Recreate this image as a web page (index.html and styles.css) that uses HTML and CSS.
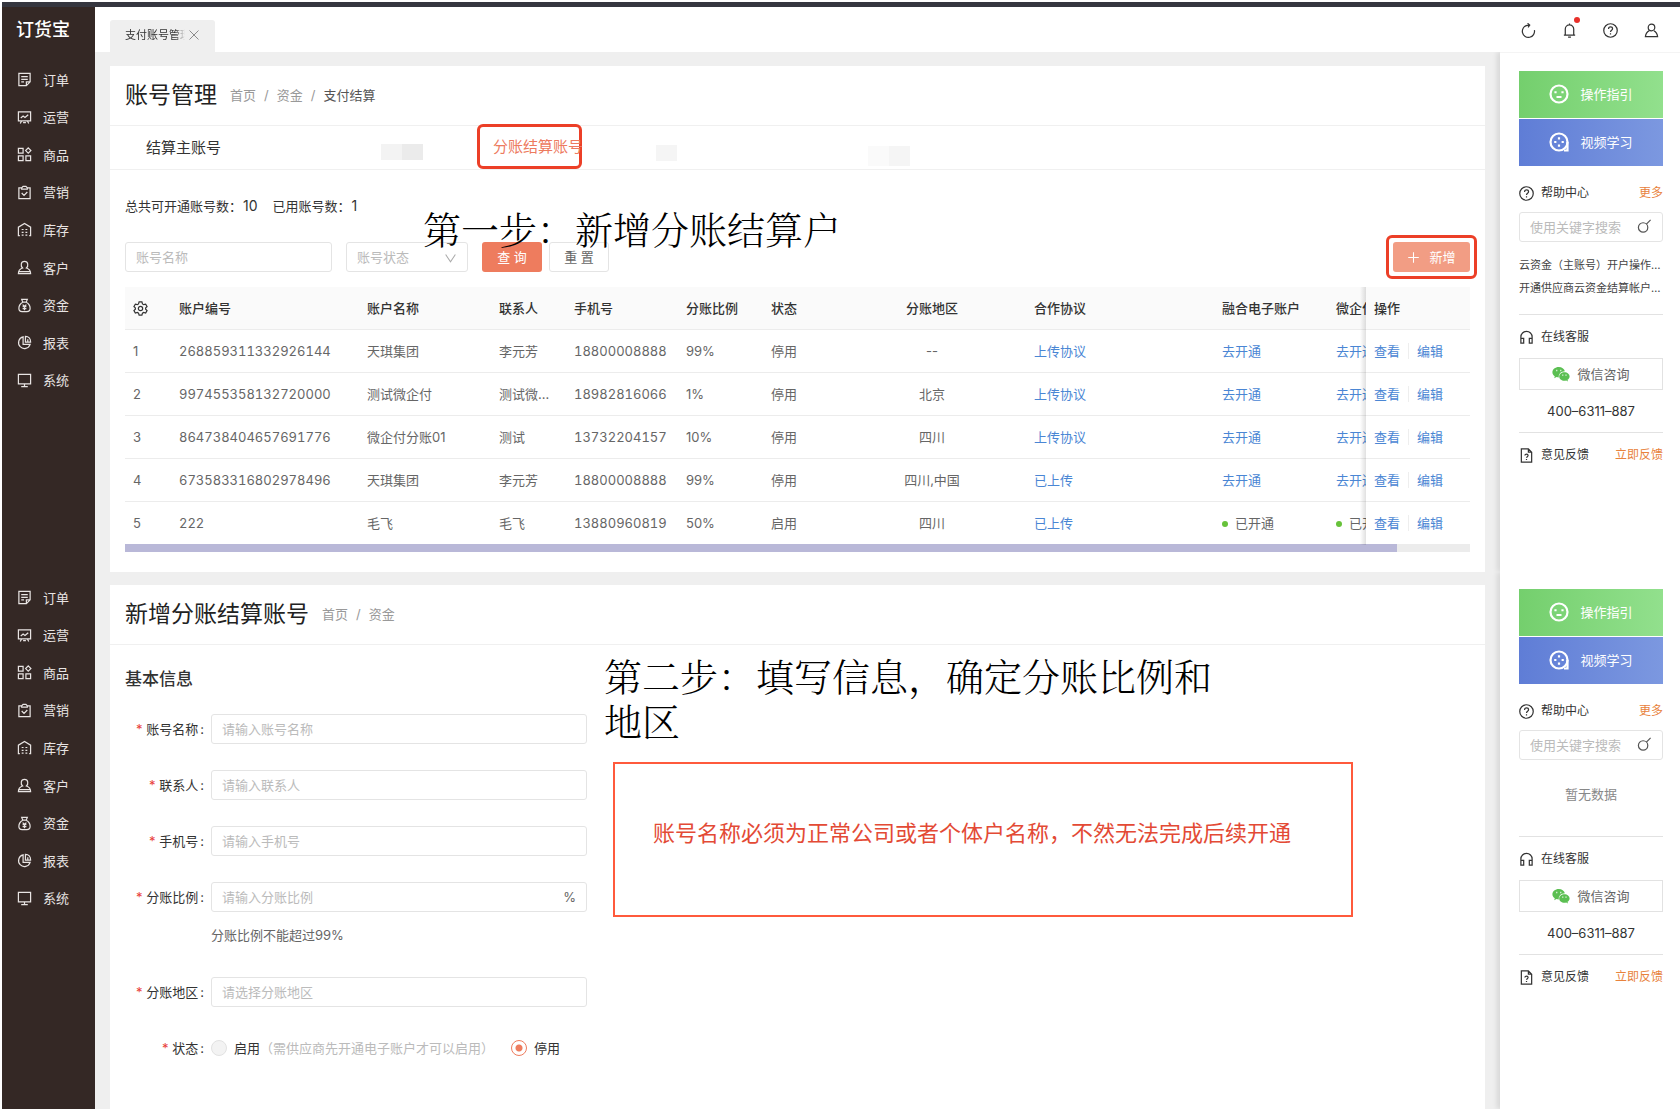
FILE: index.html
```html
<!DOCTYPE html>
<html lang="zh-CN">
<head>
    <meta charset="UTF-8">
    <meta name="viewport" content="width=device-width, initial-scale=1.0">
    <title>订货宝 - 账号管理</title>
    <link rel="stylesheet" href="styles.css">
</head>
<body>
    <!-- icon set -->
    <svg class="sprite" aria-hidden="true">
        <symbol id="i-order" viewBox="0 0 16 16"><path d="M2 1.5h12v9l-4 4H2zM14 10.5h-4v4M4.5 5h7M4.5 7.8h7M4.5 10.6h3"/></symbol>
        <symbol id="i-run" viewBox="0 0 16 16"><path d="M1.5 2h13v9.500h-13zM4 8.500l2.500-2 2 1.500L12 5M5 11.500l-1.500 3M11 11.500l1.500 3M6.500 13.500h3"/></symbol>
        <symbol id="i-goods" viewBox="0 0 16 16"><path d="M1.500 1.500h5v5h-5zM1.500 9.500h5v5h-5zM9.500 9.500h5v5h-5zM12 1l2.800 2.800L12 6.600 9.200 3.800z"/></symbol>
        <symbol id="i-market" viewBox="0 0 16 16"><path d="M5 3H2v11.500h12V3h-3M5 4.500V3l1.500-1.500h3L11 3v1.500zM5 8.500l2.500 2.500L11 7.500"/></symbol>
        <symbol id="i-stock" viewBox="0 0 16 16"><path d="M3 14.500H1.500V5.500L8 1.500l6.500 4v9H13M5 8h2M9 8h2M5 11h2M9 11h2M5 14h2M9 14h2"/></symbol>
        <symbol id="i-client" viewBox="0 0 16 16"><path d="M6 8.500C3.700 6.500 3.800 1.500 8 1.500s4.300 5 2 7c2.500.8 4.500 2.500 4.500 6h-13c0-3.500 2-5.200 4.500-6zM2 12.300h12"/></symbol>
        <symbol id="i-money" viewBox="0 0 16 16"><path d="M5 1.500h6L9.800 4.500H6.200zM6.200 4.500C3.500 6 2 8.500 2 11c0 2.500 1.500 3.500 3.500 3.500h5c2 0 3.500-1 3.500-3.500 0-2.500-1.500-5-4.200-6.500M6 7l2 2 2-2M8 9v4M6 9.300h4M6 11.300h4"/></symbol>
        <symbol id="i-report" viewBox="0 0 16 16"><path d="M6.500 2A6.300 6.300 0 1 0 14 10H6.500zM9 1.500V7.500h5.500C14.500 4 12.500 1.500 9 1.500zM11.500 4.500v3"/></symbol>
        <symbol id="i-system" viewBox="0 0 16 16"><path d="M1.500 1.500h13v10h-13zM8 11.500v3M4.500 14.500h7"/></symbol>
        <symbol id="i-refresh" viewBox="0 0 16 16"><path d="M14.300 7.500A6.500 6.500 0 1 1 6.500 2.500L9 2.300M7 .3l2.300 2-1.800 2.400"/></symbol>
        <symbol id="i-bell" viewBox="0 0 16 16"><path d="M3.500 13V6.500a4.500 4.500 0 0 1 9 0V13M2 13h12M8 2V.5M6.500 15h3"/></symbol>
        <symbol id="i-help" viewBox="0 0 16 16"><circle cx="8" cy="8" r="7.200"/><path d="M5.900 6.300c0-3 4.300-2.800 4.300-.2C10.200 7.700 8 7.700 8 9.500M8 11v1.200"/></symbol>
        <symbol id="i-user" viewBox="0 0 16 16"><circle cx="8" cy="4.800" r="3.500"/><path d="M5.500 8.200C3 9.500 1.800 11.500 1.500 14.500h13c-.3-3-1.500-5-4-6.300"/></symbol>
        <symbol id="i-gear" viewBox="0 0 16 16"><path d="M6.500 1h3l.6 2.100 1.300.8 2.100-.6L15 5.900l-1.500 1.500v1.300L15 10.200l-1.500 2.600-2.100-.6-1.300.8-.6 2.100h-3l-.6-2.100-1.300-.8-2.100.6L1 10.200l1.500-1.500V7.400L1 5.900l1.500-2.600 2.100.6 1.300-.8z"/><circle cx="8" cy="8" r="2.300"/></symbol>
        <symbol id="i-search" viewBox="0 0 16 16"><circle cx="6.500" cy="9" r="5"/><path d="M10 5.500L14.500 1"/></symbol>
        <symbol id="i-headset" viewBox="0 0 16 16"><path d="M2 10V7.500a6 6 0 0 1 12 0V10M2 9h3v5H2zM11 9h3v5h-3z"/></symbol>
        <symbol id="i-doc" viewBox="0 0 16 16"><path d="M2.500 1h7.500l3.500 3.500V15h-11zM10 1v3.500h3.500M6.300 8c0-2 3.400-2 3.400 0C9.700 9.200 8 9.300 8 10.500M8 11.800v1"/></symbol>
        <symbol id="i-smile" viewBox="0 0 20 20"><circle cx="10" cy="10" r="8.500"/><path d="M6.500 7.300v2M13.500 7.300v2M7.500 13h5"/></symbol>
        <symbol id="i-video" viewBox="0 0 20 20"><circle cx="10" cy="10" r="8.500"/><path d="M10 5.200v2.200M10 12.600v2.200M5.200 10h2.200M12.600 10h2.200M18.500 10v9.500M15 18.500h4"/></symbol>
        <symbol id="i-wechat" viewBox="0 0 18 16"><path fill="#5bbf52" stroke="none" d="M6.800 1C3.200 1 .4 3.300.4 6.200c0 1.700.9 3.100 2.400 4.100L2.200 12.300l2.300-1.200c.8.200 1.500.3 2.300.3C6.400 8 9 5.400 12.900 5.300 12.200 2.800 9.800 1 6.800 1z"/><path fill="#5bbf52" stroke="none" d="M12.400 6.200c-2.900 0-5.200 1.900-5.200 4.300s2.300 4.300 5.200 4.300c.6 0 1.200-.1 1.800-.3l1.800 1-.5-1.700c1.300-.8 2.100-2 2.100-3.300 0-2.400-2.300-4.300-5.200-4.300z"/><path stroke="#fff" d="M4.300 4.500h1M8.300 4.500h1M10.300 9.200h1M13.500 9.200h1"/></symbol>
        <symbol id="i-close" viewBox="0 0 16 16"><path d="M2 2l12 12M14 2L2 14"/></symbol>
        <symbol id="i-down" viewBox="0 0 16 16"><path d="M2 3l6 9 6-9"/></symbol>
        <symbol id="i-plus" viewBox="0 0 16 16"><path d="M8 1.500v13M1.500 8h13"/></symbol>
    </svg>

    <div class="topline"></div>

    <!-- account list -->
    <div class="screen">
        <aside class="sidebar">
            <div class="logo">订货宝</div>
            <nav class="menu">
                <a href="#"><svg><use href="#i-order"/></svg>订单</a>
                <a href="#"><svg><use href="#i-run"/></svg>运营</a>
                <a href="#"><svg><use href="#i-goods"/></svg>商品</a>
                <a href="#"><svg><use href="#i-market"/></svg>营销</a>
                <a href="#"><svg><use href="#i-stock"/></svg>库存</a>
                <a href="#"><svg><use href="#i-client"/></svg>客户</a>
                <a href="#"><svg><use href="#i-money"/></svg>资金</a>
                <a href="#"><svg><use href="#i-report"/></svg>报表</a>
                <a href="#"><svg><use href="#i-system"/></svg>系统</a>
            </nav>
        </aside>

        <header class="header">
            <div class="page-tab">
                <span class="page-tab-name">支付账号管理</span>
                <button class="icon-button" aria-label="关闭"><svg class="icon-close"><use href="#i-close"/></svg></button>
            </div>
            <div class="header-tools">
                <button class="icon-button" aria-label="刷新"><svg><use href="#i-refresh"/></svg></button>
                <button class="icon-button" aria-label="消息"><svg><use href="#i-bell"/></svg><span class="dot"></span></button>
                <button class="icon-button" aria-label="帮助"><svg><use href="#i-help"/></svg></button>
                <button class="icon-button" aria-label="用户"><svg><use href="#i-user"/></svg></button>
            </div>
        </header>

        <main class="main">
            <section class="card list-card">
                <div class="card-title">
                    <h1>账号管理</h1>
                    <div class="breadcrumb"><a href="#">首页</a><i>/</i><a href="#">资金</a><i>/</i><span class="current">支付结算</span></div>
                </div>
                <div class="tabs">
                    <button class="tab">结算主账号</button>
                    <span class="blank blank-a"></span>
                    <button class="tab active">分账结算账号</button>
                    <span class="blank blank-b"></span>
                    <span class="blank blank-c"></span>
                </div>
                <div class="list-body">
                    <div class="stats">
                        <span>总共可开通账号数：<b>10</b></span>
                        <span>已用账号数：<b>1</b></span>
                    </div>
                    <div class="filter">
                        <input type="text" class="field filter-name" placeholder="账号名称" aria-label="账号名称">
                        <div class="select-box">
                            <select class="field" aria-label="账号状态">
                                <option>账号状态</option>
                                <option>启用</option>
                                <option>停用</option>
                            </select>
                            <svg><use href="#i-down"/></svg>
                        </div>
                        <button class="btn btn-primary">查 询</button>
                        <button class="btn btn-reset">重 置</button>
                        <div class="add-mark">
                            <button class="btn btn-add"><svg><use href="#i-plus"/></svg>新增</button>
                        </div>
                    </div>
                    <table class="table">
                        <colgroup>
                            <col class="c-index"><col class="c-no"><col class="c-name"><col class="c-contact"><col class="c-phone"><col class="c-ratio"><col class="c-status"><col class="c-area"><col><col class="c-account"><col class="c-wx"><col class="c-action">
                        </colgroup>
                        <thead>
                            <tr>
                                <th><svg class="icon-gear"><use href="#i-gear"/></svg></th>
                                <th>账户编号</th>
                                <th>账户名称</th>
                                <th>联系人</th>
                                <th>手机号</th>
                                <th>分账比例</th>
                                <th>状态</th>
                                <th class="center">分账地区</th>
                                <th>合作协议</th>
                                <th>融合电子账户</th>
                                <th class="cut">微企付</th>
                                <th class="fixed">操作</th>
                            </tr>
                        </thead>
                        <tbody>
                            <tr>
                                <td>1</td>
                                <td class="num">268859311332926144</td>
                                <td>天琪集团</td>
                                <td class="contact">李元芳</td>
                                <td class="num">18800008888</td>
                                <td>99%</td>
                                <td>停用</td>
                                <td class="center">--</td>
                                <td><a href="#">上传协议</a></td>
                                <td><a href="#">去开通</a></td>
                                <td class="cut"><a href="#">去开通</a></td>
                                <td class="fixed"><a href="#">查看</a><a href="#">编辑</a></td>
                            </tr>
                            <tr>
                                <td>2</td>
                                <td class="num">997455358132720000</td>
                                <td>测试微企付</td>
                                <td class="contact">测试微企付</td>
                                <td class="num">18982816066</td>
                                <td>1%</td>
                                <td>停用</td>
                                <td class="center">北京</td>
                                <td><a href="#">上传协议</a></td>
                                <td><a href="#">去开通</a></td>
                                <td class="cut"><a href="#">去开通</a></td>
                                <td class="fixed"><a href="#">查看</a><a href="#">编辑</a></td>
                            </tr>
                            <tr>
                                <td>3</td>
                                <td class="num">864738404657691776</td>
                                <td>微企付分账01</td>
                                <td class="contact">测试</td>
                                <td class="num">13732204157</td>
                                <td>10%</td>
                                <td>停用</td>
                                <td class="center">四川</td>
                                <td><a href="#">上传协议</a></td>
                                <td><a href="#">去开通</a></td>
                                <td class="cut"><a href="#">去开通</a></td>
                                <td class="fixed"><a href="#">查看</a><a href="#">编辑</a></td>
                            </tr>
                            <tr>
                                <td>4</td>
                                <td class="num">673583316802978496</td>
                                <td>天琪集团</td>
                                <td class="contact">李元芳</td>
                                <td class="num">18800008888</td>
                                <td>99%</td>
                                <td>停用</td>
                                <td class="center">四川,中国</td>
                                <td><a href="#">已上传</a></td>
                                <td><a href="#">去开通</a></td>
                                <td class="cut"><a href="#">去开通</a></td>
                                <td class="fixed"><a href="#">查看</a><a href="#">编辑</a></td>
                            </tr>
                            <tr>
                                <td>5</td>
                                <td class="num">222</td>
                                <td>毛飞</td>
                                <td class="contact">毛飞</td>
                                <td class="num">13880960819</td>
                                <td>50%</td>
                                <td>启用</td>
                                <td class="center">四川</td>
                                <td><a href="#">已上传</a></td>
                                <td><span class="opened">已开通</span></td>
                                <td class="cut"><span class="opened">已开通</span></td>
                                <td class="fixed"><a href="#">查看</a><a href="#">编辑</a></td>
                            </tr>
                        </tbody>
                    </table>
                    <div class="scrollbar"><div class="scrollbar-thumb"></div></div>
                </div>
                <p class="step step-one">第一步：新增分账结算户</p>
            </section>
        </main>

        <aside class="helper">
            <a href="#" class="guide guide-green"><svg><use href="#i-smile"/></svg>操作指引</a>
            <a href="#" class="guide guide-blue"><svg><use href="#i-video"/></svg>视频学习</a>
            <div class="helper-title help-center"><svg><use href="#i-help"/></svg>帮助中心<a href="#">更多</a></div>
            <div class="search">
                <input type="text" class="field" placeholder="使用关键字搜索" aria-label="使用关键字搜索">
                <svg><use href="#i-search"/></svg>
            </div>
            <div class="articles">
                <a href="#">云资金（主账号）开户操作指引</a>
                <a href="#">开通供应商云资金结算帐户流程</a>
            </div>
            <div class="helper-title line"><svg><use href="#i-headset"/></svg>在线客服</div>
            <button class="wechat"><svg><use href="#i-wechat"/></svg>微信咨询</button>
            <div class="phone">400–6311–887</div>
            <div class="helper-title line"><svg><use href="#i-doc"/></svg>意见反馈<a href="#">立即反馈</a></div>
        </aside>
    </div>

    <!-- new account form -->
    <div class="screen screen-form">
        <aside class="sidebar">
            <nav class="menu">
                <a href="#"><svg><use href="#i-order"/></svg>订单</a>
                <a href="#"><svg><use href="#i-run"/></svg>运营</a>
                <a href="#"><svg><use href="#i-goods"/></svg>商品</a>
                <a href="#"><svg><use href="#i-market"/></svg>营销</a>
                <a href="#"><svg><use href="#i-stock"/></svg>库存</a>
                <a href="#"><svg><use href="#i-client"/></svg>客户</a>
                <a href="#"><svg><use href="#i-money"/></svg>资金</a>
                <a href="#"><svg><use href="#i-report"/></svg>报表</a>
                <a href="#"><svg><use href="#i-system"/></svg>系统</a>
            </nav>
        </aside>

        <main class="main">
            <section class="card form-card">
                <div class="card-title">
                    <h1>新增分账结算账号</h1>
                    <div class="breadcrumb"><a href="#">首页</a><i>/</i><a href="#">资金</a></div>
                </div>
                <div class="form-body">
                    <form class="form">
                        <h2>基本信息</h2>
                        <div class="form-row">
                            <label for="name">账号名称</label>
                            <input type="text" class="field" id="name" placeholder="请输入账号名称">
                        </div>
                        <div class="form-row">
                            <label for="contact">联系人</label>
                            <input type="text" class="field" id="contact" placeholder="请输入联系人">
                        </div>
                        <div class="form-row">
                            <label for="mobile">手机号</label>
                            <input type="text" class="field" id="mobile" placeholder="请输入手机号">
                        </div>
                        <div class="form-row">
                            <label for="ratio">分账比例</label>
                            <div class="suffix-box">
                                <input type="text" class="field" id="ratio" placeholder="请输入分账比例">
                                <span class="suffix">%</span>
                            </div>
                            <p class="hint">分账比例不能超过99%</p>
                        </div>
                        <div class="form-row">
                            <label for="area">分账地区</label>
                            <input type="text" class="field" id="area" placeholder="请选择分账地区">
                        </div>
                        <div class="form-row">
                            <span class="label">状态</span>
                            <div class="radios">
                                <input type="radio" name="status" id="on" disabled>
                                <label for="on">启用<span>（需供应商先开通电子账户才可以启用）</span></label>
                                <input type="radio" name="status" id="off" checked>
                                <label for="off">停用</label>
                            </div>
                        </div>
                    </form>
                    <div class="notes">
                        <p class="step">第二步：填写信息，确定分账比例和地区</p>
                        <div class="warning">账号名称必须为正常公司或者个体户名称，不然无法完成后续开通</div>
                    </div>
                </div>
            </section>
        </main>

        <aside class="helper">
            <a href="#" class="guide guide-green"><svg><use href="#i-smile"/></svg>操作指引</a>
            <a href="#" class="guide guide-blue"><svg><use href="#i-video"/></svg>视频学习</a>
            <div class="helper-title help-center"><svg><use href="#i-help"/></svg>帮助中心<a href="#">更多</a></div>
            <div class="search">
                <input type="text" class="field" placeholder="使用关键字搜索" aria-label="使用关键字搜索">
                <svg><use href="#i-search"/></svg>
            </div>
            <div class="empty">暂无数据</div>
            <div class="helper-title line"><svg><use href="#i-headset"/></svg>在线客服</div>
            <button class="wechat"><svg><use href="#i-wechat"/></svg>微信咨询</button>
            <div class="phone">400–6311–887</div>
            <div class="helper-title line"><svg><use href="#i-doc"/></svg>意见反馈<a href="#">立即反馈</a></div>
        </aside>
    </div>
</body>
</html>
```
FILE: styles.css
```css
* {
    box-sizing: border-box;
}
body {
    display: flex;
    flex-direction: column;
    min-height: 100vh;
    margin: 0;
    padding: 2px 0 3px 2px;
    background-color: #fff;
    color: #333;
    font-family: Inter, "Noto Sans CJK SC", sans-serif;
    font-size: 13px;
    line-height: 20px;
}
h1, h2, p {
    margin: 0;
    font-weight: 400;
}
a {
    color: inherit;
    text-decoration: none;
}
button, input, select {
    margin: 0;
    font: inherit;
    color: inherit;
}
button {
    padding: 0;
    border: none;
    background: none;
    cursor: pointer;
}
svg {
    flex: none;
    width: 15px;
    height: 15px;
    fill: none;
    stroke: currentColor;
    stroke-width: 1.3;
}
.sprite {
    position: absolute;
    width: 0;
    height: 0;
}
.topline {
    height: 5px;
    background-color: #35363f;
}
.screen {
    display: grid;
    grid-template-columns: 93px minmax(0, 1fr) 180px;
    grid-template-rows: 45px auto;
    background-color: #efefef;
}
.screen-form {
    flex: 1;
    grid-template-rows: auto;
}

/* left menu */
.sidebar {
    grid-row: 1 / -1;
    background-color: #342825;
    color: #e8e4e3;
}
.logo {
    height: 54px;
    padding: 13px 0 0 14px;
    color: #fff;
    font-size: 18px;
    font-weight: 500;
}
.menu {
    display: grid;
    grid-auto-rows: 1fr;
    height: 338px;
}
.screen-form .menu {
    margin-top: 7px;
}
.menu a {
    display: flex;
    align-items: center;
    gap: 11px;
    padding-left: 15px;
}

/* header */
.header {
    grid-column: 2 / -1;
    display: flex;
    justify-content: space-between;
    padding: 0 21px 0 15px;
    background-color: #fff;
}
.page-tab {
    display: flex;
    align-items: center;
    gap: 3px;
    width: 105px;
    margin-top: 13px;
    padding: 0 15px 2px;
    background-color: #efefef;
    border-radius: 3px 3px 0 0;
    font-size: 11px;
}
.page-tab-name {
    width: 60px;
    overflow: hidden;
    white-space: nowrap;
    -webkit-mask-image: linear-gradient(90deg, #000 50px, transparent 60px);
    mask-image: linear-gradient(90deg, #000 50px, transparent 60px);
}
.icon-button {
    display: flex;
    position: relative;
}
.icon-close {
    width: 12px;
    height: 12px;
    color: #888;
}
.header-tools {
    display: flex;
    align-items: center;
    gap: 26px;
    padding-top: 2px;
}
.dot {
    position: absolute;
    top: -6px;
    right: -3px;
    width: 6px;
    height: 6px;
    background-color: #e8302a;
    border-radius: 50%;
}

/* cards */
.main {
    display: flex;
    flex-direction: column;
    padding: 14px 15px 0;
}
.screen-form .main {
    padding-top: 13px;
}
.card {
    position: relative;
    flex: 1;
    background-color: #fff;
}
.card-title {
    display: flex;
    align-items: center;
    gap: 13px;
    height: 60px;
    padding: 0 15px 1px;
    border-bottom: 1px solid #f0f0f0;
}
.card-title h1 {
    color: #222;
    font-size: 23px;
    line-height: 30px;
}
.breadcrumb {
    color: #999;
}
.breadcrumb i {
    margin: 0 8px;
    font-style: normal;
}
.breadcrumb .current {
    color: #555;
}
.tabs {
    display: flex;
    align-items: center;
    height: 44px;
    padding-left: 36px;
    border-bottom: 1px solid #f0f0f0;
    font-size: 15px;
}
.tab.active {
    align-self: stretch;
    margin: -2px 0 0 54px;
    width: 105px;
    padding-left: 13px;
    border: 3px solid #ec3f27;
    border-radius: 6px;
    color: #ed7b5f;
    white-space: nowrap;
}
.blank {
    height: 16px;
    background-color: #f5f5f5;
}
.blank-a {
    width: 42px;
    margin: 8px 0 0 160px;
    background: linear-gradient(90deg, #f3f3f3 50%, #ebebeb 50%);
}
.blank-b {
    width: 21px;
    margin: 10px 0 0 74px;
}
.blank-c {
    width: 42px;
    height: 20px;
    margin: 16px 0 0 191px;
    background: linear-gradient(90deg, #fafafa 50%, #f5f5f5 50%);
}
.list-body {
    padding: 26px 15px 20px;
}
.stats {
    display: flex;
    gap: 15px;
}
.stats b {
    margin-left: 1px;
    font-size: 14px;
    font-weight: 400;
}

/* filter */
.filter {
    display: flex;
    align-items: center;
    height: 30px;
    margin: 26px 0 15px;
}
.field {
    width: 100%;
    height: 30px;
    padding: 0 10px;
    border: 1px solid #e4e4e4;
    border-radius: 3px;
    background-color: #fff;
    outline: none;
}
.field::placeholder {
    color: #bbb;
    opacity: 1;
}
.filter-name {
    width: 207px;
}
.select-box {
    position: relative;
    width: 122px;
    margin: 0 14px;
}
.select-box select {
    appearance: none;
    color: #bbb;
}
.select-box svg {
    position: absolute;
    top: 10px;
    right: 11px;
    width: 13px;
    height: 13px;
    color: #aaa;
    pointer-events: none;
}
.btn {
    width: 60px;
    height: 30px;
    border-radius: 3px;
}
.btn-primary {
    background-color: #ee7c5e;
    color: #fff;
}
.btn-reset {
    margin-left: 7px;
    border: 1px solid #e4e4e4;
    color: #666;
}
.add-mark {
    margin: 0 -7px 0 auto;
    padding: 4px;
    border: 3px solid #ec3f27;
    border-radius: 6px;
}
.btn-add {
    display: flex;
    align-items: center;
    justify-content: center;
    gap: 9px;
    width: 77px;
    background-color: #f29d84;
    color: #fff;
}
.btn-add svg {
    width: 13px;
    height: 13px;
}

/* table */
.table {
    width: 100%;
    table-layout: fixed;
    border-collapse: separate;
    border-spacing: 0;
    color: #666;
}
.c-index { width: 46px; }
.c-no, .c-area { width: 188px; }
.c-name { width: 132px; }
.c-contact, .c-status { width: 75px; }
.c-phone { width: 112px; }
.c-ratio { width: 85px; }
.c-account { width: 114px; }
.c-wx { width: 38px; }
.c-action { width: 104px; }
.table th, .table td {
    height: 43px;
    padding: 0 8px;
    border-bottom: 1px solid #ececec;
    text-align: left;
    white-space: nowrap;
}
.table tr:last-child td {
    height: 42px;
    border-bottom: none;
}
.table th {
    background-color: #fafafa;
    color: #333;
    font-weight: 500;
}
.table tr:last-child th {
    border-bottom: 1px solid #ececec;
}
.table .center {
    text-align: center;
}
.table .contact {
    padding-right: 16px;
    overflow: hidden;
    text-overflow: ellipsis;
}
.table .cut {
    padding-right: 0;
    overflow: hidden;
}
.table .fixed {
    position: relative;
}
.table .fixed::before {
    content: "";
    position: absolute;
    top: 0;
    bottom: -1px;
    left: -6px;
    width: 6px;
    background: linear-gradient(90deg, rgba(0, 0, 0, 0), rgba(0, 0, 0, 0.12));
}
.table .fixed a + a {
    margin-left: 8px;
    padding-left: 8px;
    border-left: 1px solid #eee;
}
.table a {
    color: #4a86d4;
}
.num {
    font-variant-numeric: tabular-nums;
}
.icon-gear {
    display: block;
}
.opened::before {
    content: "";
    display: inline-block;
    width: 6px;
    height: 6px;
    margin-right: 7px;
    border-radius: 50%;
    background-color: #67c23a;
    vertical-align: middle;
}
.scrollbar {
    height: 8px;
    background-color: #ececec;
}
.scrollbar-thumb {
    width: 94.6%;
    height: 8px;
    background-color: #b9b8d8;
}

/* step captions */
.step {
    color: #000;
    font-family: "Noto Serif CJK SC", "Noto Sans CJK SC", serif;
    font-size: 38px;
    font-weight: 300;
    line-height: 45px;
}
.step-one {
    position: absolute;
    top: 139px;
    left: 313px;
}

/* form */
.form-body {
    display: flex;
    gap: 17px;
    padding: 0 15px;
}
.form {
    flex: none;
    width: 462px;
    padding-top: 23px;
}
.form h2 {
    margin-bottom: 24px;
    font-size: 17px;
    font-weight: 500;
    line-height: 22px;
}
.form-row {
    display: grid;
    grid-template-columns: 79px 1fr;
    column-gap: 7px;
    align-items: center;
    min-height: 30px;
    margin-bottom: 26px;
}
.form-row > label, .label {
    text-align: right;
}
.form-row > label::before, .label::before {
    content: "* ";
    color: #e8403a;
}
.form-row > label::after, .label::after {
    content: ":";
    margin-left: 2px;
}
.suffix-box {
    position: relative;
}
.suffix {
    position: absolute;
    top: 5px;
    right: 11px;
    color: #666;
}
.hint {
    grid-column: 2;
    margin: 13px 0 6px;
    color: #666;
}
.radios {
    display: flex;
    align-items: center;
}
.radios input {
    appearance: none;
    width: 16px;
    height: 16px;
    margin-right: 7px;
    border: 1px solid #e2e2e2;
    border-radius: 50%;
    background-color: #f3f3f3;
}
.radios input:checked {
    margin-left: 17px;
    border-color: #ee7c5e;
    background: radial-gradient(circle, #ee7c5e 3px, #fff 4px);
}
.radios span {
    color: #bbb;
}
.notes {
    flex: 1;
    max-width: 749px;
    padding-top: 7px;
}
.notes .step {
    max-width: 620px;
}
.warning {
    display: flex;
    align-items: center;
    height: 155px;
    margin: 20px 0 0 9px;
    padding: 0 0 14px 38px;
    border: 2px solid #ff5a3c;
    color: #e34a35;
    font-size: 22px;
    white-space: nowrap;
}

/* right helper column */
.helper {
    position: relative;
    padding: 18px 17px 0 19px;
    border-top: 1px solid #f4f4f4;
    background-color: #fff;
    box-shadow: -3px 0 5px rgba(0, 0, 0, 0.1);
    clip-path: inset(0 0 0 -8px);
    font-size: 12px;
}
.screen-form .helper {
    padding-top: 17px;
    border-top: none;
}
.guide {
    display: flex;
    align-items: center;
    justify-content: center;
    gap: 11px;
    height: 47px;
    padding-bottom: 1px;
    color: #fff;
    font-size: 13px;
}
.guide svg {
    width: 20px;
    height: 20px;
    stroke-width: 2.2;
}
.guide-green {
    background: linear-gradient(90deg, #74cf6d, #92e08d);
}
.guide-blue {
    margin-top: 1px;
    background: linear-gradient(90deg, #5f7dd6, #7c98e0);
}
.helper-title {
    display: flex;
    align-items: center;
    gap: 7px;
}
.helper-title a {
    margin-left: auto;
    color: #e8823c;
}
.help-center {
    margin: 17px 0 9px;
}
.line {
    margin-top: 11px;
    padding-top: 12px;
    border-top: 1px solid #e2e2e2;
}
.search {
    position: relative;
}
.search .field {
    padding-right: 38px;
    font-size: 13px;
}
.search svg {
    position: absolute;
    top: 7px;
    right: 11px;
    color: #555;
}
.articles {
    margin: 12px 0 14px;
    color: #444;
    font-size: 11px;
    line-height: 23px;
}
.articles a {
    display: block;
    overflow: hidden;
    text-overflow: ellipsis;
    white-space: nowrap;
}
.empty {
    margin: 24px 0 32px;
    color: #888;
    font-size: 13px;
    text-align: center;
}
.wechat {
    display: flex;
    align-items: center;
    justify-content: center;
    gap: 7px;
    width: 100%;
    height: 32px;
    margin: 11px 0;
    border: 1px solid #e2e2e2;
    color: #666;
    font-size: 13px;
}
.wechat svg {
    width: 18px;
    height: 16px;
}
.phone {
    color: #333;
    font-size: 13px;
    text-align: center;
}
```
